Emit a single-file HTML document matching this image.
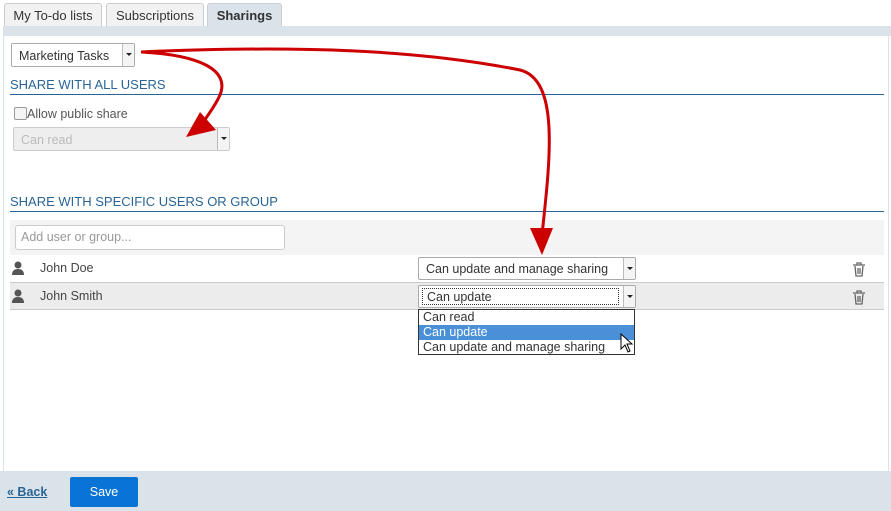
<!DOCTYPE html>
<html><head><style>
body{margin:0;width:891px;height:511px;background:#fff;font-family:"Liberation Sans",sans-serif;position:relative;overflow:hidden;font-size:12.5px;color:#333}
.abs{position:absolute}
.tab{position:absolute;top:3px;height:23px;border:1px solid #c8ced3;border-bottom:none;background:#f2f2f2;border-radius:3px 3px 0 0;font-size:13px;line-height:23px;text-align:center;color:#333}
.sel{border:1px solid #aaa;border-radius:2px;background:#fff;height:22px;line-height:22px;padding-left:7px;box-sizing:border-box}
.dd{position:absolute;right:0;top:0;width:11px;height:100%;border-left:1px solid #bbb;background:#f4f4f4}
.dd:after{content:"";position:absolute;left:3px;top:9px;border:3px solid transparent;border-top:3px solid #222}
h3{position:absolute;margin:0;font-weight:normal;font-size:13px;color:#2a6496;left:10px;width:874px;border-bottom:1px solid #2a6496;padding-bottom:2px}
</style></head><body>
<div class="tab" style="left:4px;width:96px">My To-do lists</div>
<div class="tab" style="left:106px;width:96px">Subscriptions</div>
<div class="tab" style="left:207px;width:73px;background:#dbe3ea;font-weight:bold">Sharings</div>
<div class="abs" style="left:3px;top:26px;width:888px;height:10px;background:#dbe3ea"></div>
<div class="abs" style="left:3px;top:36px;width:884px;height:435px;border-left:1px solid #dbe3ea;border-right:1px solid #dbe3ea"></div>
<div class="abs" style="left:0;top:471px;width:891px;height:40px;background:#dbe3ea"></div>

<div class="abs sel" style="left:11px;top:43px;width:124px;height:24px;line-height:24px">Marketing Tasks<div class="dd"></div></div>
<h3 style="top:77px">SHARE WITH ALL USERS</h3>
<div class="abs" style="left:14px;top:107px;width:11px;height:11px;border:1px solid #999;border-radius:2px;background:#f4f4f4"></div>
<div class="abs" style="left:27px;top:107px;color:#555">Allow public share</div>
<div class="abs sel" style="left:13px;top:127px;width:217px;height:24px;line-height:24px;background:#eee;color:#bbb;border-color:#ccc">Can read<div class="dd"></div></div>

<h3 style="top:194px">SHARE WITH SPECIFIC USERS OR GROUP</h3>
<div class="abs" style="left:10px;top:220px;width:874px;height:35px;background:#f4f4f4"></div>
<div class="abs" style="left:15px;top:225px;width:270px;height:25px;border:1px solid #ccc;border-radius:3px;background:#fff;box-sizing:border-box;line-height:23px;padding-left:5px;color:#999">Add user or group...</div>
<div class="abs" style="left:10px;top:282px;width:874px;height:28px;background:#ececec;border-top:1px solid #ccc;border-bottom:1px solid #ccc;box-sizing:border-box"></div>
<svg class="abs" style="left:11px;top:261px" width="14" height="14"><circle cx="7" cy="4" r="3.5" fill="#555"/><path d="M1 14 Q1 8 7 8 Q13 8 13 14Z" fill="#555"/></svg>
<svg class="abs" style="left:11px;top:289px" width="14" height="14"><circle cx="7" cy="4" r="3.5" fill="#555"/><path d="M1 14 Q1 8 7 8 Q13 8 13 14Z" fill="#555"/></svg>
<div class="abs" style="left:40px;top:261px;color:#444">John Doe</div>
<div class="abs" style="left:40px;top:289px;color:#444">John Smith</div>
<div class="abs sel" style="left:418px;top:257px;width:218px;height:23px;line-height:23px">Can update and manage sharing<div class="dd"></div></div>
<div class="abs sel" style="left:418px;top:285px;width:218px;height:23px;line-height:21px;padding-left:0"><div style="position:absolute;left:3px;top:2px;width:197px;height:17px;border:1px dotted #333;line-height:17px;padding-left:4px;box-sizing:border-box">Can update</div><div class="dd"></div></div>
<div class="abs" style="left:418px;top:309px;width:217px;height:46px;border:1px solid #333;background:#fff;box-sizing:border-box;line-height:15px">
<div style="padding-left:4px">Can read</div>
<div style="padding-left:4px;background:#4a90d9;color:#fff">Can update</div>
<div style="padding-left:4px">Can update and manage sharing</div></div>
<svg class="abs" style="left:620px;top:333px" width="16" height="22"><path d="M1 1 L1 16 L5 12 L8 19 L10 18 L7 11 L12 11 Z" fill="#fff" stroke="#000"/></svg>
<svg class="abs" style="left:852px;top:262px" width="14" height="15"><path d="M1 3H13M5 3V1H9V3M3 4L4 14H10L11 4M6 6V12M8 6V12" fill="none" stroke="#666" stroke-width="1.3"/></svg>
<svg class="abs" style="left:852px;top:290px" width="14" height="15"><path d="M1 3H13M5 3V1H9V3M3 4L4 14H10L11 4M6 6V12M8 6V12" fill="none" stroke="#666" stroke-width="1.3"/></svg>

<svg class="abs" style="left:0;top:0" width="891" height="511">
<path d="M141 52 C300 45 420 50 520 70 C560 80 550 160 542 235" fill="none" stroke="#c00" stroke-width="3"/>
<path d="M530 228 L542 255 L553 228 Z" fill="#c00"/>
<path d="M141 52 C200 55 230 70 220 95 C212 113 200 122 205 125" fill="none" stroke="#c00" stroke-width="3"/>
<path d="M200 112 L186 137 L216 130 Z" fill="#c00"/>
</svg>

<div class="abs" style="left:7px;top:485px;font-weight:bold;color:#2a6496;text-decoration:underline">« Back</div>
<div class="abs" style="left:70px;top:477px;width:68px;height:30px;background:#0a74d6;border-radius:2px;color:#fff;text-align:center;line-height:30px">Save</div>
</body></html>
